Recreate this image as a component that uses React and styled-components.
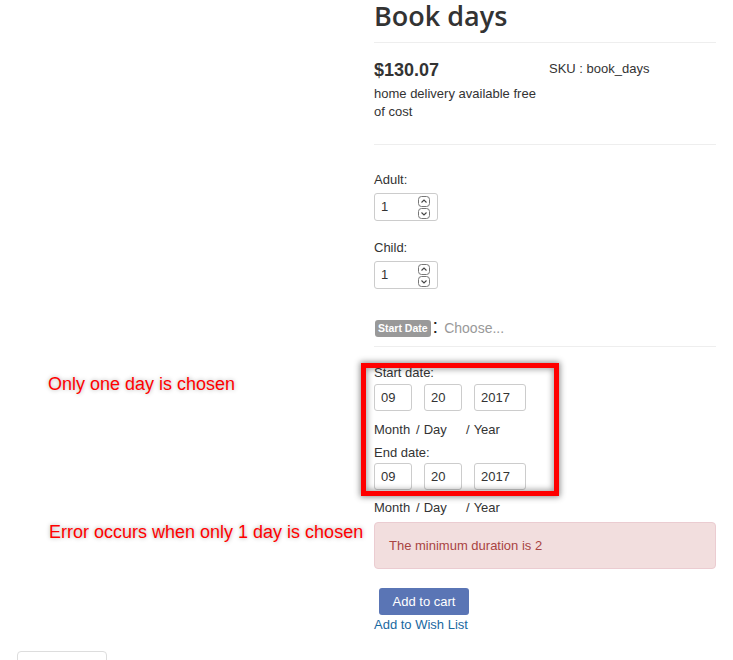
import React from 'react';
import styled, { createGlobalStyle } from 'styled-components';

const Global = createGlobalStyle`
    html, body {
        margin: 0;
        padding: 0;
        background: #fff;
    }
    body {
        font-family: "Liberation Sans", Arial, sans-serif;
        font-size: 13px;
        line-height: 18px;
        color: #333;
    }
`;

const Page = styled.div`
    width: 733px;
    height: 660px;
    overflow: hidden;
`;

const Columns = styled.div`
    display: grid;
    grid-template-columns: 374px 342px;
`;

const Notes = styled.aside`
    display: flex;
    flex-direction: column;
    padding: 374px 0 0 48px;
`;

const Note = styled.div`
    font-size: 18px;
    line-height: 20px;
    color: #f00;
    text-shadow: 0 0 4px rgba(0, 0, 0, 0.35);
    margin-top: ${p => p.$gap || 0}px;
    margin-left: ${p => p.$shift || 0}px;
    white-space: nowrap;
`;

const Product = styled.main`
    display: flex;
    flex-direction: column;
`;

const Title = styled.h1`
    margin: -1px 0 9px;
    font-family: "Open Sans", sans-serif;
    font-weight: 600;
    font-size: 27px;
    line-height: 34px;
    color: #333;
`;

const Rule = styled.hr`
    margin: 0;
    border: 0;
    border-top: 1px solid #eee;
`;

const Summary = styled.div`
    display: grid;
    grid-template-columns: 175px 1fr;
    margin: 17px 0 23px;
`;

const Price = styled.div`
    font-weight: bold;
    font-size: 18px;
    line-height: 20px;
    margin-bottom: 5px;
`;

const Sku = styled.div`
    padding-top: 0;
`;

const Field = styled.div`
    margin-top: ${p => p.$top}px;

    label {
        display: block;
        margin-bottom: ${p => p.$labelGap || 4}px;
    }
`;

const Spinner = styled.div`
    box-sizing: border-box;
    width: 64px;
    height: 28px;
    border: 1px solid #ccc;
    border-radius: 3px;
    display: flex;
    align-items: center;
    justify-content: space-between;
    padding: 0 7px 0 6px;

    svg {
        display: block;
    }
`;

const Arrows = styled.div`
    display: flex;
    flex-direction: column;
    gap: 1px;
`;

const Choice = styled.div`
    display: flex;
    align-items: center;
    margin: 29px 0 8px;
    height: 20px;
`;

const Badge = styled.span`
    background: #999;
    color: #fff;
    font-weight: bold;
    font-size: 10.5px;
    line-height: 13px;
    padding: 2px 3px 2px;
    border-radius: 3px;
    margin-left: 1px;
`;

const Colon = styled.span`
    font-size: 20px;
    color: #222;
    margin: -4px 6px 0 2px;
`;

const Placeholder = styled.span`
    font-size: 14px;
    color: #999;
`;

const Dates = styled.div`
    position: relative;
    margin-top: 17px;
`;

const Highlight = styled.div`
    position: absolute;
    left: -13px;
    top: -1px;
    width: 198px;
    height: 133px;
    box-sizing: border-box;
    border: 5px solid #f00;
    box-shadow: 0 0 6px 1px rgba(0, 0, 0, 0.45), inset 0 0 6px 1px rgba(0, 0, 0, 0.4);
    pointer-events: none;
`;

const DateLabel = styled.div`
    margin-top: ${p => p.$top || 0}px;
`;

const DateRow = styled.div`
    display: grid;
    grid-template-columns: 38px 38px 52px;
    column-gap: 12px;
    margin-top: ${p => p.$top || 0}px;
`;

const DateBox = styled.div`
    box-sizing: border-box;
    height: 27px;
    border: 1px solid #ccc;
    border-radius: 3px;
    padding-left: 6px;
    line-height: 25px;
`;

const Part = styled.span`
    margin-left: ${p => (p.$slash ? -8 : 0)}px;
    white-space: nowrap;

    i {
        font-style: normal;
        margin-right: 4px;
    }
`;

const Alert = styled.div`
    margin-top: 5px;
    box-sizing: border-box;
    height: 47px;
    display: flex;
    align-items: center;
    padding: 1px 14px 0;
    background: #f2dede;
    border: 1px solid #ebccd1;
    border-radius: 4px;
    color: #a94442;
`;

const CartButton = styled.button`
    align-self: flex-start;
    margin: 19px 0 0 5px;
    width: 90px;
    height: 27px;
    border: 0;
    border-radius: 3px;
    background: #5a75b5;
    color: #fff;
    font-family: inherit;
    font-size: 13px;
    padding: 0;
`;

const WishLink = styled.a`
    color: #19689f;
    text-decoration: none;
    align-self: flex-start;
    margin-top: 1px;
`;

const Footer = styled.div`
    margin: 17px 0 0 17px;
    width: 90px;
    height: 30px;
    box-sizing: border-box;
    border: 1px solid #ddd;
    border-radius: 4px;
`;

const Chevron = ({ up }) => (
    <svg width="12" height="11" viewBox="0 0 12 11">
        <rect x="0.5" y="0.5" width="11" height="10" rx="3" fill="#fff" stroke="#777" />
        <path
            d={up ? 'M3.5 6.5 L6 4 L8.5 6.5' : 'M3.5 4.5 L6 7 L8.5 4.5'}
            fill="none"
            stroke="#444"
            strokeWidth="1.1"
        />
    </svg>
);

const NumberField = ({ label, top, labelGap }) => (
    <Field $top={top} $labelGap={labelGap}>
        <label>{label}</label>
        <Spinner>
            <span>1</span>
            <Arrows>
                <Chevron up />
                <Chevron />
            </Arrows>
        </Spinner>
    </Field>
);

const DateParts = ({ top }) => (
    <DateRow $top={top}>
        <Part>Month</Part>
        <Part $slash><i>/</i>Day</Part>
        <Part $slash><i>/</i>Year</Part>
    </DateRow>
);

const DateInputs = ({ top }) => (
    <DateRow $top={top}>
        <DateBox>09</DateBox>
        <DateBox>20</DateBox>
        <DateBox>2017</DateBox>
    </DateRow>
);

const App = () => (
    <Page>
        <Global />
        <Columns>
            <Notes>
                <Note>Only one day is chosen</Note>
                <Note $gap={128} $shift={1}>Error occurs when only 1 day is chosen</Note>
            </Notes>
            <Product>
                <Title>Book days</Title>
                <Rule />
                <Summary>
                    <div>
                        <Price>$130.07</Price>
                        <div>home delivery available free of cost</div>
                    </div>
                    <Sku>SKU : book_days</Sku>
                </Summary>
                <Rule />
                <NumberField label="Adult:" top={26} />
                <NumberField label="Child:" top={18} labelGap={4} />
                <Choice>
                    <Badge>Start Date</Badge>
                    <Colon>:</Colon>
                    <Placeholder>Choose...</Placeholder>
                </Choice>
                <Rule />
                <Dates>
                    <Highlight />
                    <DateLabel>Start date:</DateLabel>
                    <DateInputs top={2} />
                    <DateParts top={10} />
                    <DateLabel $top={5}>End date:</DateLabel>
                    <DateInputs top={1} />
                    <DateParts top={9} />
                </Dates>
                <Alert>The minimum duration is 2</Alert>
                <CartButton>Add to cart</CartButton>
                <WishLink href="#">Add to Wish List</WishLink>
            </Product>
        </Columns>
        <Footer />
    </Page>
);

export default App;
